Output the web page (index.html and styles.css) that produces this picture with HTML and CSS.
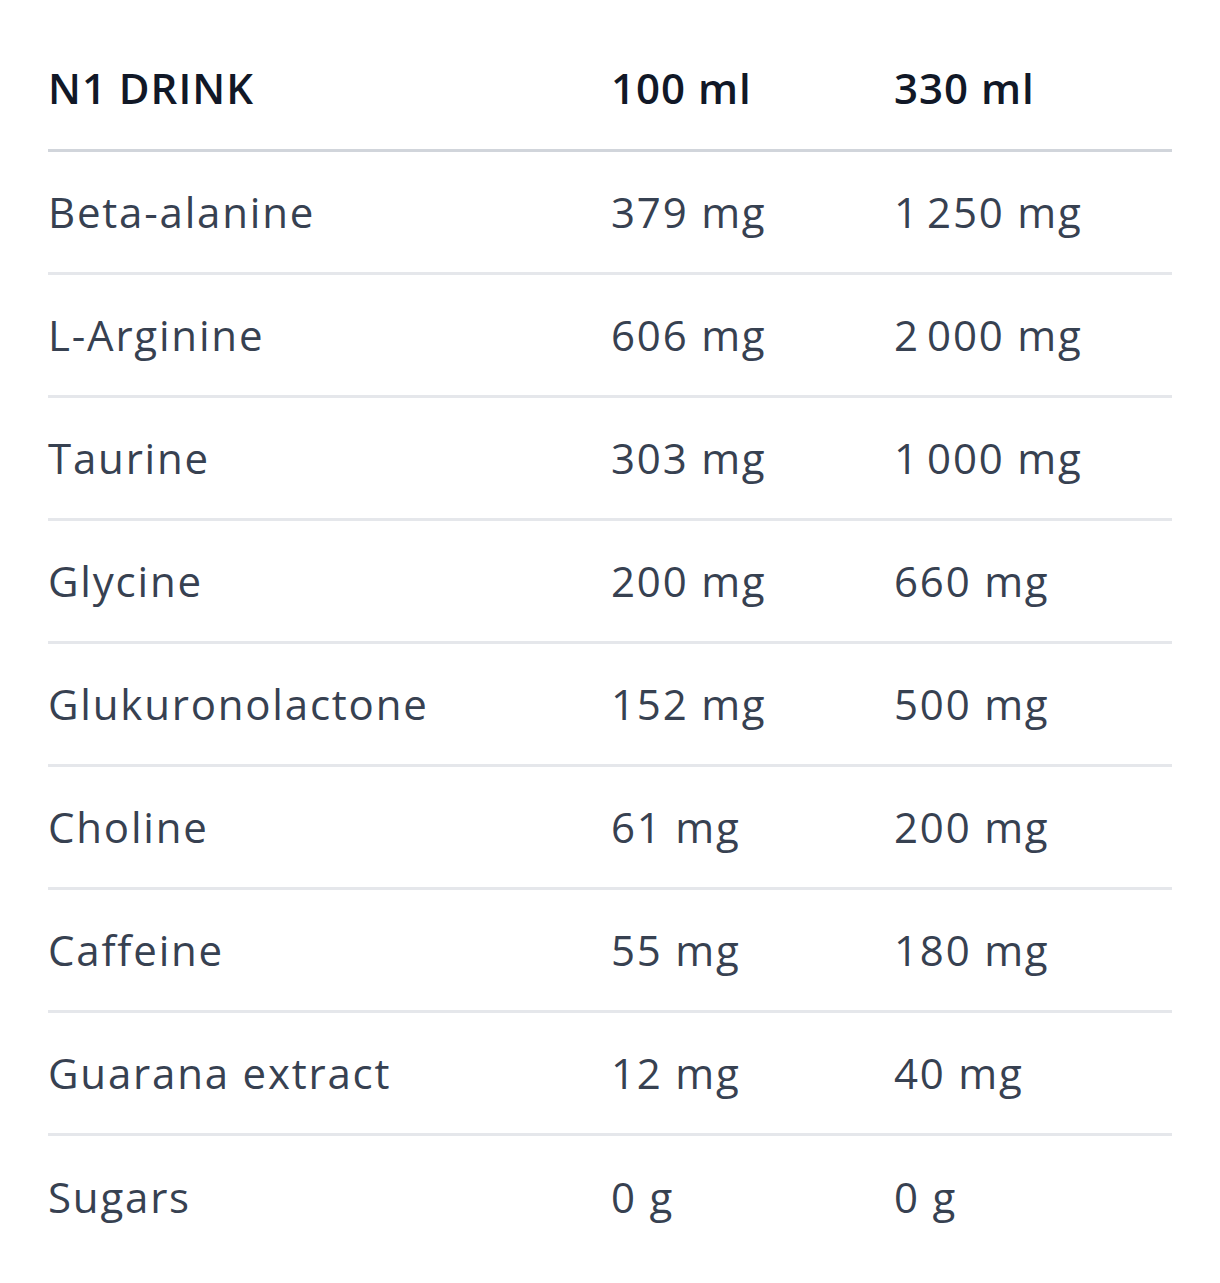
FILE: index.html
```html
<!DOCTYPE html>
<html lang="en">
    <head>
        <meta charset="utf-8">
        <title>N1 Drink</title>
        <meta name="viewport" content="width=device-width, initial-scale=1.0">
        <link rel="stylesheet" href="styles.css">
    </head>
    <body>
        <main class="container">
            <table class="nutrition">
                <thead>
                    <tr>
                        <th>N1 DRINK</th>
                        <th>100 ml</th>
                        <th>330 ml</th>
                    </tr>
                </thead>
                <tbody>
                    <tr><td>Beta-alanine</td><td>379 mg</td><td>1&#8239;250 mg</td></tr>
                    <tr><td>L-Arginine</td><td>606 mg</td><td>2&#8239;000 mg</td></tr>
                    <tr><td>Taurine</td><td>303 mg</td><td>1&#8239;000 mg</td></tr>
                    <tr><td>Glycine</td><td>200 mg</td><td>660 mg</td></tr>
                    <tr><td>Glukuronolactone</td><td>152 mg</td><td>500 mg</td></tr>
                    <tr><td>Choline</td><td>61 mg</td><td>200 mg</td></tr>
                    <tr><td>Caffeine</td><td>55 mg</td><td>180 mg</td></tr>
                    <tr><td>Guarana extract</td><td>12 mg</td><td>40 mg</td></tr>
                    <tr><td>Sugars</td><td>0 g</td><td>0 g</td></tr>
                </tbody>
            </table>
        </main>
    </body>
</html>
```

FILE: styles.css
```css
*, *::before, *::after {
    box-sizing: border-box;
}

:root {
    --text-color: #374151;
    --head-color: #111827;
    --line-head: #d1d5db;
    --line-row: #e5e7eb;
}

body {
    margin: 0;
    font-family: "Open Sans", "Liberation Sans", sans-serif;
    color: var(--text-color);
    background: #fff;
}

.container {
    padding: 27px 48px 0;
}

.nutrition {
    width: 100%;
    border-collapse: collapse;
    table-layout: fixed;
}

.nutrition th,
.nutrition td {
    height: 123px;
    padding: 0;
    text-align: left;
    vertical-align: middle;
    white-space: nowrap;
    font-size: 42px;
    letter-spacing: 1.8px;
    border-bottom: 3px solid var(--line-row);
}

.nutrition th {
    color: var(--head-color);
    font-weight: 600;
    letter-spacing: 1px;
    border-bottom-color: var(--line-head);
}

.nutrition th:first-child,
.nutrition td:first-child {
    width: 563px;
}

.nutrition th:nth-child(2),
.nutrition td:nth-child(2) {
    width: 283px;
}

.nutrition tbody tr:last-child td {
    border-bottom: none;
}
```
